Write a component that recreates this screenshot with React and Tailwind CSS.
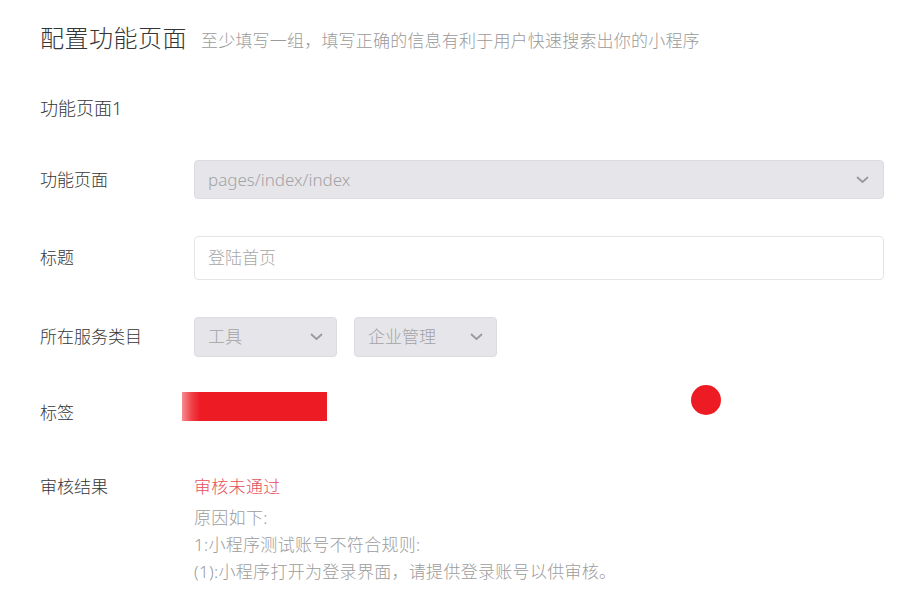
import React from "react";

const Chevron = () => (
  <svg width="13" height="8" viewBox="0 0 13 8" fill="none">
    <polyline points="1.5,1.5 6.5,6 11.5,1.5" stroke="#9a9a9e" strokeWidth="1.8" strokeLinecap="round" strokeLinejoin="round" />
  </svg>
);

const font = { fontFamily: '"Noto Sans", "Noto Sans CJK SC", sans-serif' };

export default function App() {
  return (
    <div className="relative w-[902px] h-[591px] bg-white overflow-hidden text-[#353535] font-light" style={font}>
      <div className="pl-[40px] pr-[18px] pt-[22px] flex flex-col">
        <div className="flex items-baseline gap-[14px]">
          <h1 className="text-[24px] leading-[32px] font-light text-[#353535] tracking-[0.5px]">配置功能页面</h1>
          <span className="text-[17px] leading-[24px] text-[#9a9a9a] tracking-[0.2px]">至少填写一组，填写正确的信息有利于用户快速搜索出你的小程序</span>
        </div>
        <div className="mt-[42px] text-[18px] leading-[24px] text-[#353535]">功能页面1</div>

        <div className="mt-[40px] flex items-center h-[39px]">
          <div className="w-[154px] text-[17px]">功能页面</div>
          <div className="flex-1 h-full rounded-[4px] border border-[#dcdce0] bg-[#e6e6ea] flex items-center justify-between pl-[13px] pr-[14px]">
            <span className="text-[17px] text-[#a3a3a6]">pages/index/index</span>
            <Chevron />
          </div>
        </div>

        <div className="mt-[37px] flex items-center h-[44px]">
          <div className="w-[154px] text-[17px]">标题</div>
          <div className="flex-1 h-full rounded-[4px] border border-[#e5e5e7] bg-white flex items-center pl-[13px]">
            <span className="text-[17px] text-[#a8a8a8]">登陆首页</span>
          </div>
        </div>

        <div className="mt-[37px] flex items-center h-[40px]">
          <div className="w-[154px] text-[17px]">所在服务类目</div>
          <div className="flex gap-[17px] h-full">
            <div className="w-[143px] h-full rounded-[4px] border border-[#dcdce0] bg-[#e6e6ea] flex items-center justify-between pl-[13px] pr-[13px]">
              <span className="text-[17px] text-[#a3a3a6]">工具</span>
              <Chevron />
            </div>
            <div className="w-[143px] h-full rounded-[4px] border border-[#dcdce0] bg-[#e6e6ea] flex items-center justify-between pl-[13px] pr-[13px]">
              <span className="text-[17px] text-[#a3a3a6]">企业管理</span>
              <Chevron />
            </div>
          </div>
        </div>

        <div className="mt-[35px] flex items-start h-[42px]">
          <div className="w-[142px] text-[17px] leading-[42px]">标签</div>
          <div className="h-[29px] w-[145px] bg-[linear-gradient(to_right,rgba(237,28,36,0.5)_0px,rgba(237,28,36,0.85)_10px,#ed1c24_18px,#ed1c24_100%)]" />
        </div>

        <div className="mt-[39px] flex items-start">
          <div className="w-[154px] text-[17px] leading-[27px]">审核结果</div>
          <div className="flex flex-col text-[17px] tracking-[0.3px]">
            <div className="leading-[27px] text-[#e5505a]">审核未通过</div>
            <div className="mt-[4px] leading-[27px] text-[#9c9c9c]">
              <div>原因如下:</div>
              <div>1:小程序测试账号不符合规则:</div>
              <div>(1):小程序打开为登录界面，请提供登录账号以供审核。</div>
            </div>
          </div>
        </div>
      </div>
      <div className="absolute left-[691px] top-[385px] w-[30px] h-[30px] rounded-full bg-[#ed1c24]" />
    </div>
  );
}
